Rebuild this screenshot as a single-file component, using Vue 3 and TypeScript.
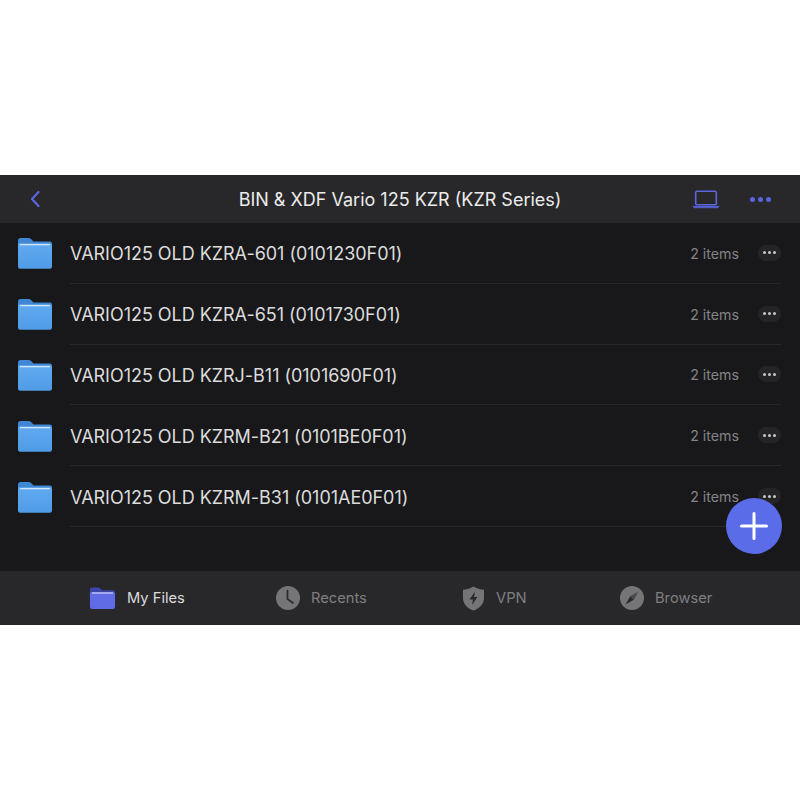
<template>
  <div class="page">
    <div class="screen">
      <header class="top-bar">
        <div class="bar-left">
          <svg class="back" width="12" height="18" viewBox="0 0 12 18">
            <path d="M9.5 2 L3 9 L9.5 16" fill="none" stroke="#5a66e0" stroke-width="2.2" stroke-linecap="round" stroke-linejoin="round" />
          </svg>
        </div>
        <h1 class="title">BIN &amp; XDF Vario 125 KZR (KZR Series)</h1>
        <div class="bar-right">
          <svg class="laptop" width="28" height="20" viewBox="0 0 28 20">
            <rect x="3.7" y="2.2" width="20.6" height="13.6" rx="1.4" fill="none" stroke="#5a66e0" stroke-width="1.6" />
            <path d="M1 17.3 H27 L26 18.8 H2 Z" fill="#5a66e0" stroke="#5a66e0" stroke-width="0.6" stroke-linejoin="round" />
          </svg>
          <div class="top-dots"><i></i><i></i><i></i></div>
        </div>
      </header>

      <main class="list">
        <div v-for="name in folders" :key="name" class="row">
          <svg class="folder" width="36" height="32" viewBox="0 0 36 32">
            <defs>
              <linearGradient id="folderFill" x1="0" y1="0" x2="0" y2="1">
                <stop offset="0" stop-color="#60aaf0" />
                <stop offset="1" stop-color="#4f9be6" />
              </linearGradient>
            </defs>
            <path d="M1 3.5 Q1 1 3.5 1 H11.5 Q13 1 14 2 L16.5 4.5 H33 Q35 4.5 35 6.5 V12 H1 Z" fill="#3f86d4" />
            <path d="M1 6.5 H33 Q35 6.5 35 8.5 V29.5 Q35 31.8 32.8 31.8 H3.2 Q1 31.8 1 29.5 Z" fill="url(#folderFill)" />
            <path d="M3 7.6 H33" stroke="#cfe4f8" stroke-width="1.4" />
          </svg>
          <div class="row-body">
            <span class="name">{{ name }}</span>
            <span class="count">2 items</span>
            <div class="more"><i></i><i></i><i></i></div>
          </div>
        </div>
        <button class="fab" type="button">
          <svg width="28" height="28" viewBox="0 0 28 28">
            <path d="M14 1.5 V26.5 M1.5 14 H26.5" stroke="#fff" stroke-width="3" stroke-linecap="round" />
          </svg>
        </button>
      </main>

      <nav class="tabs">
        <div class="tab active">
          <svg width="27" height="24" viewBox="0 0 28 24">
            <path d="M1 3 Q1 1 3 1 H9 Q10.5 1 11.5 2 L13.5 4 H25 Q27 4 27 6 V11 H1 Z" fill="#3d46a8" />
            <path d="M1 6 H25 Q27 6 27 8 V21 Q27 23.4 24.8 23.4 H3.2 Q1 23.4 1 21 Z" fill="#5f6ce6" />
            <path d="M3 6.8 H25" stroke="#d6daf8" stroke-width="1.2" />
          </svg>
          <span>My Files</span>
        </div>
        <div class="tab">
          <svg width="24" height="24" viewBox="0 0 24 24">
            <circle cx="12" cy="12" r="12" fill="#757577" />
            <path d="M11.5 4.5 V13 L17 17" fill="none" stroke="#2a2a2d" stroke-width="1.7" stroke-linecap="round" stroke-linejoin="round" />
          </svg>
          <span>Recents</span>
        </div>
        <div class="tab">
          <svg width="23" height="25" viewBox="0 0 23 25">
            <path d="M11.5 0.5 C14.5 2.5 18 3.5 22 3.7 V12 C22 18 17.5 22.5 11.5 24.5 C5.5 22.5 1 18 1 12 V3.7 C5 3.5 8.5 2.5 11.5 0.5 Z" fill="#757577" />
            <path d="M13 5.5 L7.5 13.5 H11 L10 19 L15.5 11 H12 Z" fill="#2a2a2d" />
          </svg>
          <span>VPN</span>
        </div>
        <div class="tab">
          <svg width="24" height="24" viewBox="0 0 24 24">
            <circle cx="12" cy="12" r="12" fill="#757577" />
            <path d="M18.5 5.5 L13.8 13.8 L10.2 10.2 Z" fill="#4a4a4d" />
            <path d="M5.5 18.5 L10.2 10.2 L13.8 13.8 Z" fill="#2a2a2d" />
          </svg>
          <span>Browser</span>
        </div>
      </nav>
    </div>
  </div>
</template>

<script setup lang="ts">
const folders: string[] = [
  'VARIO125 OLD KZRA-601 (0101230F01)',
  'VARIO125 OLD KZRA-651 (0101730F01)',
  'VARIO125 OLD KZRJ-B11 (0101690F01)',
  'VARIO125 OLD KZRM-B21 (0101BE0F01)',
  'VARIO125 OLD KZRM-B31 (0101AE0F01)'
]
</script>

<style>
html,
body {
  margin: 0;
  background: #fff;
}
</style>

<style scoped>
.page {
  height: 800px;
  display: flex;
  align-items: center;
  font-family: Inter, "Liberation Sans", sans-serif;
}

.screen {
  width: 800px;
  height: 450px;
  display: flex;
  flex-direction: column;
  background: #18181b;
}

.top-bar {
  height: 48px;
  flex: none;
  display: grid;
  grid-template-columns: 1fr auto 1fr;
  align-items: center;
  padding: 0 29px 0 29px;
  background: #28282b;
}

.bar-left {
  display: flex;
}

.bar-right {
  display: flex;
  align-items: center;
  justify-content: flex-end;
  gap: 30px;
}

.title {
  margin: 0;
  padding-top: 1px;
  font-size: 18px;
  font-weight: 400;
  color: #ececec;
  text-align: center;
}

.top-dots {
  display: flex;
  gap: 3px;
}

.top-dots i {
  width: 5px;
  height: 5px;
  border-radius: 50%;
  background: #5a66e0;
}

.list {
  position: relative;
  flex: 1;
}

.row {
  height: 60.8px;
  display: flex;
  align-items: center;
  padding: 0 19px 0 17px;
}

.folder {
  flex: none;
  margin-right: 17px;
}

.row-body {
  flex: 1;
  height: 100%;
  display: flex;
  align-items: center;
  border-bottom: 1px solid #28282b;
  box-sizing: border-box;
}

.name {
  flex: 1;
  padding-top: 2px;
  font-size: 18px;
  letter-spacing: -0.03px;
  color: #dcdcdc;
}

.count {
  padding-top: 1px;
  font-size: 14.2px;
  color: #848486;
  margin-right: 19px;
}

.more {
  width: 23px;
  height: 16px;
  border-radius: 8px;
  display: flex;
  align-items: center;
  justify-content: center;
  gap: 2px;
  background: #242427;
}

.more i {
  width: 3px;
  height: 3px;
  border-radius: 50%;
  background: #c8c8c8;
}

.fab {
  position: absolute;
  left: 726px;
  top: 275px;
  width: 56px;
  height: 56px;
  padding: 0;
  border: none;
  border-radius: 50%;
  background: #5a6ce8;
  display: flex;
  align-items: center;
  justify-content: center;
}

.tabs {
  height: 54px;
  flex: none;
  display: grid;
  grid-template-columns: 187px 186px 158px auto;
  align-items: center;
  padding-left: 89px;
  background: #28282b;
}

.tab {
  display: flex;
  align-items: center;
  gap: 11px;
  font-size: 14.7px;
  color: #7f7f81;
}

.tab.active {
  color: #dcdcdc;
}
</style>
